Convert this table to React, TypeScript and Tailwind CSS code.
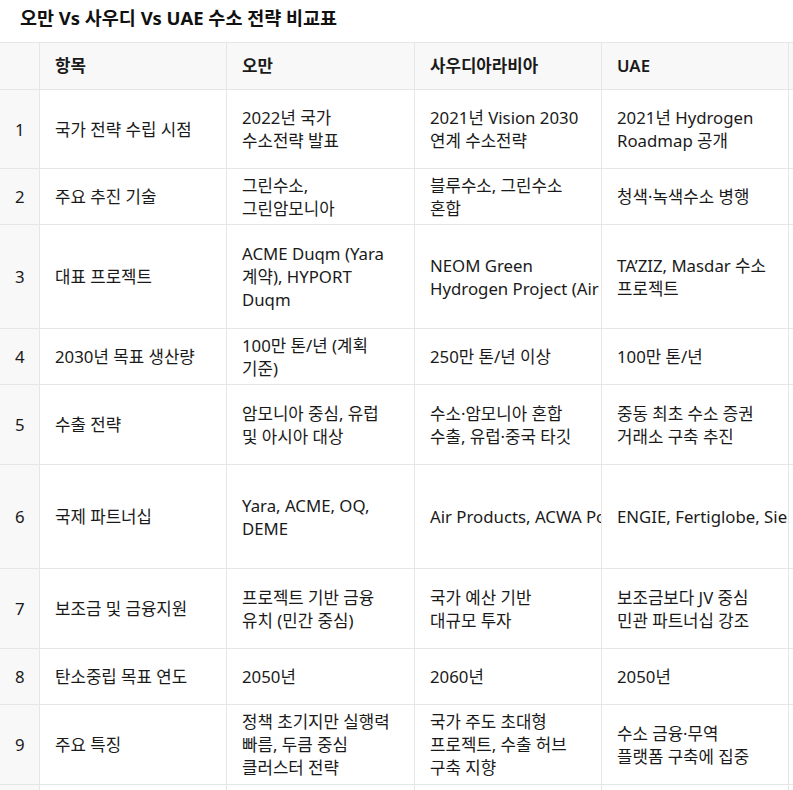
const rows: { h: number; item: string; oman: string[]; saudi: string[]; uae: string[] }[] = [
  { h: 79, item: "국가 전략 수립 시점", oman: ["2022년 국가", "수소전략 발표"], saudi: ["2021년 Vision 2030", "연계 수소전략"], uae: ["2021년 Hydrogen", "Roadmap 공개"] },
  { h: 56, item: "주요 추진 기술", oman: ["그린수소,", "그린암모니아"], saudi: ["블루수소, 그린수소", "혼합"], uae: ["청색·녹색수소 병행"] },
  { h: 104, item: "대표 프로젝트", oman: ["ACME Duqm (Yara", "계약), HYPORT", "Duqm"], saudi: ["NEOM Green", "Hydrogen Project (Air"], uae: ["TA’ZIZ, Masdar 수소", "프로젝트"] },
  { h: 56, item: "2030년 목표 생산량", oman: ["100만 톤/년 (계획", "기준)"], saudi: ["250만 톤/년 이상"], uae: ["100만 톤/년"] },
  { h: 80, item: "수출 전략", oman: ["암모니아 중심, 유럽", "및 아시아 대상"], saudi: ["수소·암모니아 혼합", "수출, 유럽·중국 타깃"], uae: ["중동 최초 수소 증권", "거래소 구축 추진"] },
  { h: 104, item: "국제 파트너십", oman: ["Yara, ACME, OQ,", "DEME"], saudi: ["Air Products, ACWA Power"], uae: ["ENGIE, Fertiglobe, Siemens"] },
  { h: 80, item: "보조금 및 금융지원", oman: ["프로젝트 기반 금융", "유치 (민간 중심)"], saudi: ["국가 예산 기반", "대규모 투자"], uae: ["보조금보다 JV 중심", "민관 파트너십 강조"] },
  { h: 56, item: "탄소중립 목표 연도", oman: ["2050년"], saudi: ["2060년"], uae: ["2050년"] },
  { h: 80, item: "주요 특징", oman: ["정책 초기지만 실행력", "빠름, 두큼 중심", "클러스터 전략"], saudi: ["국가 주도 초대형", "프로젝트, 수출 허브", "구축 지향"], uae: ["수소 금융·무역", "플랫폼 구축에 집중"] },
];

function Cell({ lines, h, first }: { lines: string[]; h: number; first?: boolean }) {
  return (
    <div
      className={`flex items-center overflow-hidden whitespace-nowrap border-r border-b border-[#e6e6e6] px-[15px] ${first ? "bg-[#f8f8f8]" : "bg-white"}`}
      style={{ height: h }}
    >
      <div className="leading-[23px]">
        {lines.map((l, i) => (
          <div key={i}>{l}</div>
        ))}
      </div>
    </div>
  );
}

export default function App() {
  return (
    <div className="w-[793px] h-[790px] overflow-hidden bg-white text-[16.8px] text-[#1a1a1a] font-['Segoe_UI','Noto_Sans','Noto_Sans_CJK_KR',sans-serif]">
      <h1 className="h-[42px] pl-[20px] pt-[4px] text-[18.5px] font-bold text-[#111]">
        오만 Vs 사우디 Vs UAE 수소 전략 비교표
      </h1>
      <div className="grid grid-cols-[40px_187px_188px_187px_187px_8px] border-t border-[#e6e6e6]">
        <div className="h-[47px] border-r border-b border-[#e6e6e6] bg-[#f8f8f8]" />
        {["항목", "오만", "사우디아라비아", "UAE"].map((t) => (
          <div
            key={t}
            className="flex h-[47px] items-center border-r border-b border-[#e6e6e6] bg-[#f8f8f8] px-[15px] font-semibold"
          >
            {t}
          </div>
        ))}
        <div className="h-[47px] border-b border-[#e6e6e6] bg-[#f8f8f8]" />
        {rows.map((r, i) => (
          <div key={i} className="contents">
            <Cell lines={[String(i + 1)]} h={r.h} first />
            <Cell lines={[r.item]} h={r.h} />
            <Cell lines={r.oman} h={r.h} />
            <Cell lines={r.saudi} h={r.h} />
            <Cell lines={r.uae} h={r.h} />
            <div className="border-b border-[#e6e6e6] bg-white" style={{ height: r.h }} />
          </div>
        ))}
        <div className="h-[40px] border-r border-[#e6e6e6] bg-[#f8f8f8]" />
        <div className="h-[40px] border-r border-[#e6e6e6]" />
        <div className="h-[40px] border-r border-[#e6e6e6]" />
        <div className="h-[40px] border-r border-[#e6e6e6]" />
        <div className="h-[40px] border-r border-[#e6e6e6]" />
        <div className="h-[40px]" />
      </div>
    </div>
  );
}
